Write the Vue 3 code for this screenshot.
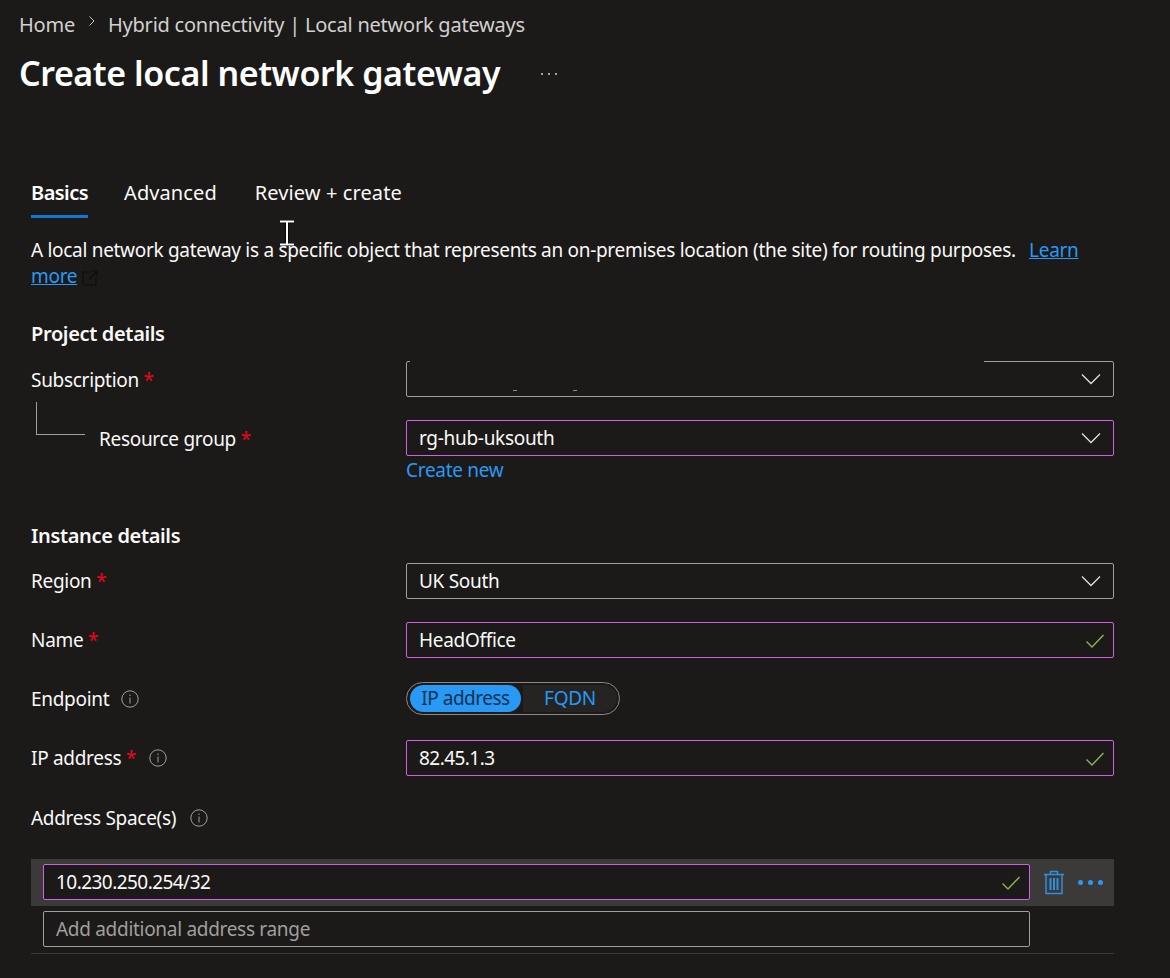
<template>
  <div class="page">
    <!-- Breadcrumb + title -->
    <nav class="breadcrumb">
      <span>Home</span>
      <svg class="crumb-sep" width="8" height="12" viewBox="0 0 8 12"><path d="M1.5 1.5 6 6 1.5 10.5" fill="none" stroke="#c8c6c4" stroke-width="1"/></svg>
      <span>Hybrid connectivity | Local network gateways</span>
    </nav>
    <div class="title-row">
      <h1>Create local network gateway</h1>
      <svg class="more" width="18" height="4" viewBox="0 0 18 4"><circle cx="2" cy="2" r="1" fill="#d2d0ce"/><circle cx="9" cy="2" r="1" fill="#d2d0ce"/><circle cx="16" cy="2" r="1" fill="#d2d0ce"/></svg>
    </div>

    <div class="content">
      <div class="tabs">
        <div v-for="tab in tabs" :key="tab" :class="['tab', { active: tab === 'Basics' }]">{{ tab }}</div>
      </div>

      <p class="intro">
        A local network gateway is a specific object that represents an on-premises location (the site) for routing purposes.&nbsp; <a class="link underline learn">Learn</a> <a class="link underline">more</a><svg class="ext" width="16" height="16" viewBox="0 0 16 16"><path d="M9 2H1v13h13V8M7 9.5 15 1M10 1h5v5" fill="none" stroke="#0c0c0c" stroke-width="1.2"/></svg>
      </p>

      <h2 class="first">Project details</h2>
      <div class="row">
        <label class="nudge">Subscription <span class="req">*</span></label>
        <div class="field">
          <span class="redact"></span>
          <span class="speck one"></span>
          <span class="speck two"></span>
          <svg class="chev" width="20" height="12" viewBox="0 0 20 12"><path d="M1 1.5 10 10.5 19 1.5" fill="none" stroke="#e1dfdd" stroke-width="1.3"/></svg>
        </div>
      </div>
      <div class="row tight">
        <label class="child nudge"><span class="tree"></span>Resource group <span class="req">*</span></label>
        <div>
          <div class="field focus">
            rg-hub-uksouth
            <svg class="chev" width="20" height="12" viewBox="0 0 20 12"><path d="M1 1.5 10 10.5 19 1.5" fill="none" stroke="#e1dfdd" stroke-width="1.3"/></svg>
          </div>
          <a class="link create">Create new</a>
        </div>
      </div>

      <h2>Instance details</h2>
      <div class="row">
        <label>Region <span class="req">*</span></label>
        <div class="field">
          UK South
          <svg class="chev" width="20" height="12" viewBox="0 0 20 12"><path d="M1 1.5 10 10.5 19 1.5" fill="none" stroke="#e1dfdd" stroke-width="1.3"/></svg>
        </div>
      </div>
      <div class="row">
        <label>Name <span class="req">*</span></label>
        <div class="field focus">
          HeadOffice
          <svg class="chk" width="20" height="16" viewBox="0 0 20 16"><path d="M1.5 8.5 7 14 18.5 2" fill="none" stroke="#8db35a" stroke-width="1.4"/></svg>
        </div>
      </div>
      <div class="row">
        <label>Endpoint<svg class="info" width="18" height="18" viewBox="0 0 18 18"><circle cx="9" cy="9" r="8.2" fill="none" stroke="#a19f9d" stroke-width="1"/><path d="M9 7.5v6M9 4.5v1.4" stroke="#8a8886" stroke-width="1.2"/></svg></label>
        <div class="toggle">
          <span class="opt on">IP address</span>
          <span class="opt">FQDN</span>
        </div>
      </div>
      <div class="row">
        <label>IP address <span class="req">*</span><svg class="info wide" width="18" height="18" viewBox="0 0 18 18"><circle cx="9" cy="9" r="8.2" fill="none" stroke="#a19f9d" stroke-width="1"/><path d="M9 7.5v6M9 4.5v1.4" stroke="#8a8886" stroke-width="1.2"/></svg></label>
        <div class="field focus num">
          82.45.1.3
          <svg class="chk" width="20" height="16" viewBox="0 0 20 16"><path d="M1.5 8.5 7 14 18.5 2" fill="none" stroke="#8db35a" stroke-width="1.4"/></svg>
        </div>
      </div>
      <div class="addr-label">Address Space(s)<svg class="info" width="18" height="18" viewBox="0 0 18 18"><circle cx="9" cy="9" r="8.2" fill="none" stroke="#a19f9d" stroke-width="1"/><path d="M9 7.5v6M9 4.5v1.4" stroke="#8a8886" stroke-width="1.2"/></svg></div>

      <div class="addr-row">
        <div class="field focus addr num">
          10.230.250.254/32
          <svg class="chk" width="20" height="16" viewBox="0 0 20 16"><path d="M1.5 8.5 7 14 18.5 2" fill="none" stroke="#8db35a" stroke-width="1.4"/></svg>
        </div>
        <svg class="trash" width="20" height="25" viewBox="0 0 20 25" fill="none" stroke="#2f8fe0" stroke-width="1.5">
          <path d="M0 4.5h20M6.5 4.5V1.5h7v3M2 4.5v19h16v-19"/>
          <path d="M6.5 8v12M10 8v12M13.5 8v12" stroke-width="2"/>
        </svg>
        <div class="dots"><i></i><i></i><i></i></div>
      </div>
      <div class="addr-new">
        <div class="field addr placeholder">Add additional address range</div>
      </div>
      <div class="sep"></div>
    </div>

    <!-- mouse cursor caught in the screenshot -->
    <svg class="cursor" width="14" height="26" viewBox="0 0 14 26"><path d="M0 1.5h14M0 24.5h14M7 1.5v23" fill="none" stroke="#000" stroke-width="3.4"/><path d="M0 1.5h14M0 24.5h14M7 1.5v23" fill="none" stroke="#fff" stroke-width="2"/></svg>
  </div>
</template>

<script setup>
const tabs = ['Basics', 'Advanced', 'Review + create']
</script>

<style scoped>
.page {
  position: relative;
  height: 978px;
  overflow: hidden;
  background: #1b1a19;
  color: #faf9f8;
  font-family: "Noto Sans", sans-serif;
  font-size: 19px;
  letter-spacing: -0.3px;
}

.breadcrumb {
  display: flex;
  align-items: center;
  height: 26px;
  padding: 11px 0 0 19px;
  font-size: 20px;
  letter-spacing: -0.23px;
  color: #d2d0ce;
}

.crumb-sep {
  margin: -6px 12px 0 13px;
}

.title-row {
  display: flex;
  align-items: center;
  height: 48px;
  margin-top: 11px;
  padding-left: 19px;
}

h1 {
  margin: 2px 0 0;
  font-size: 34px;
  font-weight: 600;
  letter-spacing: -0.43px;
  color: #fff;
}

.more {
  margin: 4px 0 0 40px;
}

.content {
  width: 1083px;
  padding: 77px 0 0 31px;
}

.tabs {
  display: flex;
  gap: 36px;
  height: 44px;
  font-size: 20px;
  letter-spacing: 0.1px;
}

.tab {
  height: 40px;
  line-height: 32px;
  padding-top: 4px;
}

.tab:nth-child(2) {
  margin-right: 2px;
}

.tab.active {
  font-weight: 600;
  letter-spacing: -0.55px;
  color: #fff;
  border-bottom: 3px solid #0f78d4;
  height: 38px;
}

.intro {
  margin: 20px 0 0;
  line-height: 26px;
  height: 52px;
}

.link {
  color: #2899f5;
}

.underline {
  text-decoration: underline;
}

.learn {
  margin-left: 4px;
}

.ext {
  margin-left: 5px;
  vertical-align: -3px;
}

h2 {
  margin: 40px 0 14px;
  font-size: 20px;
  font-weight: 600;
  letter-spacing: -0.35px;
  line-height: 26px;
}

h2.first {
  margin-top: 32px;
}

.row {
  display: grid;
  grid-template-columns: 375px 708px;
  align-items: center;
  margin-bottom: 23px;
}

.row.tight {
  align-items: start;
  margin-bottom: 0;
}

label {
  line-height: 36px;
  display: flex;
  align-items: center;
  white-space: pre;
}

.nudge {
  margin: 1px 0 -1px;
}

.req {
  color: #f1021a;
}

.child {
  padding-left: 5px;
}

.tree {
  width: 49px;
  height: 33px;
  margin: -42px 14px 0 0;
  border-left: 1px solid #a19f9d;
  border-bottom: 1px solid #a19f9d;
  box-sizing: border-box;
}

.field {
  position: relative;
  box-sizing: border-box;
  height: 36px;
  line-height: 34px;
  padding-left: 12px;
  border: 1px solid #a19f9d;
  border-radius: 2px;
  background: #1b1a19;
}

.field.focus {
  border-color: #d060e8;
}

.num {
  letter-spacing: -0.55px;
}

.redact {
  position: absolute;
  left: 3px;
  top: -2px;
  width: 574px;
  height: 4px;
  background: #1b1a19;
}

.speck {
  position: absolute;
  top: 28px;
  width: 4px;
  height: 1px;
  background: #8a8886;
}

.speck.one { left: 106px; }
.speck.two { left: 166px; }

.chev {
  position: absolute;
  right: 12px;
  top: 11px;
}

.chk {
  position: absolute;
  right: 8px;
  top: 10px;
}

.info {
  margin-left: 12px;
  flex-shrink: 0;
}

.info.wide {
  margin-left: 13px;
}

.toggle {
  display: flex;
  box-sizing: border-box;
  width: 214px;
  height: 33px;
  margin-bottom: 1px;
  padding: 2px 2px 2px 3px;
  border: 1px solid #8a8886;
  border-radius: 17px;
}

.opt {
  flex: 1;
  text-align: center;
  line-height: 26px;
  border-radius: 0 14px 14px 0;
  background: #252423;
  color: #2899f5;
}

.opt.on {
  flex: none;
  width: 111px;
  margin-right: 2px;
  letter-spacing: -0.5px;
  background: #2899f5;
  color: #10324f;
  border-radius: 14px;
}

.addr-label {
  display: flex;
  align-items: center;
  height: 26px;
  margin-top: 29px;
}

.addr-label .info {
  margin-left: 14px;
}

.addr-row {
  display: flex;
  align-items: center;
  height: 47px;
  margin-top: 28px;
  padding-left: 12px;
  background: #3b3a39;
}

.addr-row .addr {
  margin-bottom: 2px;
}

.addr {
  width: 987px;
  flex-shrink: 0;
}

.trash {
  margin-left: 14px;
}

.dots {
  display: flex;
  gap: 5px;
  margin-left: 14px;
}

.dots i {
  width: 5px;
  height: 5px;
  border-radius: 50%;
  background: #2899f5;
}

.addr-new {
  padding: 5px 0 0 12px;
}

.placeholder {
  color: #a19f9d;
}

.sep {
  height: 1px;
  margin-top: 6px;
  background: #3b3a39;
}

.create {
  display: block;
  line-height: 26px;
  margin-top: 1px;
}

.cursor {
  position: absolute;
  left: 280px;
  top: 220px;
}
</style>

<style>
html, body {
  margin: 0;
  background: #1b1a19;
}
</style>
